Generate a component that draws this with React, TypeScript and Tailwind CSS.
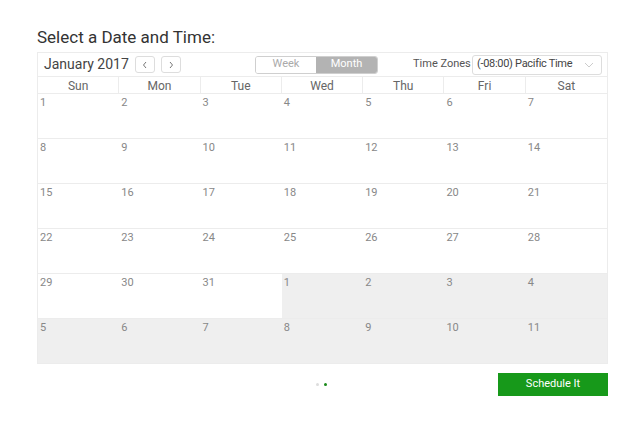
import React from "react";

const days = [
  [1, 2, 3, 4, 5, 6, 7],
  [8, 9, 10, 11, 12, 13, 14],
  [15, 16, 17, 18, 19, 20, 21],
  [22, 23, 24, 25, 26, 27, 28],
  [29, 30, 31, 1, 2, 3, 4],
  [5, 6, 7, 8, 9, 10, 11],
];
const names = ["Sun", "Mon", "Tue", "Wed", "Thu", "Fri", "Sat"];

export default function App() {
  return (
    <div
      className="w-[637px] h-[423px] bg-white pl-[37px] pt-[26px] text-[#333] whitespace-nowrap"
      style={{ fontFamily: "Roboto, 'Liberation Sans', sans-serif" }}
    >
      <h1 className="text-[17px] leading-[22px] text-[#333]">Select a Date and Time:</h1>
      <div className="mt-[4px] w-[571px] border-x border-t border-[#ececec]">
        <div className="h-[24px] flex items-center border-b border-[#ececec]">
          <span className="ml-[6px] w-[85px] shrink-0 text-[14px] text-[#444]">January 2017</span>
          <div className="ml-[6px] flex gap-[6px] shrink-0">
            <button className="w-[20px] h-[17px] border border-[#ddd] rounded-[3px] flex items-center justify-center">
              <svg width="6" height="8" viewBox="0 0 6 8"><path d="M4 1 L1.5 4 L4 7" fill="none" stroke="#777" strokeWidth="1"/></svg>
            </button>
            <button className="w-[20px] h-[17px] border border-[#ddd] rounded-[3px] flex items-center justify-center">
              <svg width="6" height="8" viewBox="0 0 6 8"><path d="M2 1 L4.5 4 L2 7" fill="none" stroke="#777" strokeWidth="1"/></svg>
            </button>
          </div>
          <div className="ml-[74px] shrink-0 flex h-[18px] border border-[#cfcfcf] rounded-[3px] overflow-hidden text-[11px]">
            <div className="w-[60px] flex items-center justify-center text-[#aaa] bg-white">Week</div>
            <div className="w-[61px] flex items-center justify-center text-white bg-[#b3b3b3]">Month</div>
          </div>
          <span className="ml-[35px] w-[55px] shrink-0 text-[11px] text-[#555]">Time Zones</span>
          <div className="ml-[4px] shrink-0 w-[130px] h-[20px] border border-[#ddd] rounded-[3px] flex items-center justify-between pl-[4px] pr-[7px] text-[11px] text-[#444]">
            <span className="tracking-[-0.3px]">(-08:00) Pacific Time</span>
            <svg width="10" height="6" viewBox="0 0 10 6"><path d="M1 1 L5 5 L9 1" fill="none" stroke="#ccc" strokeWidth="1"/></svg>
          </div>
        </div>
        <div className="grid grid-cols-7 h-[17px] border-b border-[#ececec]">
          {names.map((n, i) => (
            <div
              key={n}
              className={`flex items-center justify-center text-[12px] text-[#666] ${i < 6 ? "border-r border-[#ececec]" : ""}`}
            >
              {n}
            </div>
          ))}
        </div>
        {days.map((row, r) => (
          <div key={r} className="grid grid-cols-7 h-[45px] border-b border-[#ececec]">
            {row.map((d, c) => {
              const gray = r === 5 || (r === 4 && c >= 3);
              return (
                <div
                  key={c}
                  className={`${gray ? "bg-[#efefef]" : "bg-white"} pl-[2px] pt-[1px] text-[11px] text-[#888]`}
                >
                  {d}
                </div>
              );
            })}
          </div>
        ))}
      </div>
      <div className="w-[571px] mt-[9px] flex items-center">
        <div className="ml-[279px] flex gap-[5px] items-center">
          <span className="w-[3px] h-[3px] rounded-full bg-[#ddd]" />
          <span className="w-[3px] h-[3px] rounded-full bg-[#1a8a1a]" />
        </div>
        <button className="ml-auto w-[110px] h-[23px] bg-[#17991a] text-white text-[11px]">Schedule It</button>
      </div>
    </div>
  );
}
